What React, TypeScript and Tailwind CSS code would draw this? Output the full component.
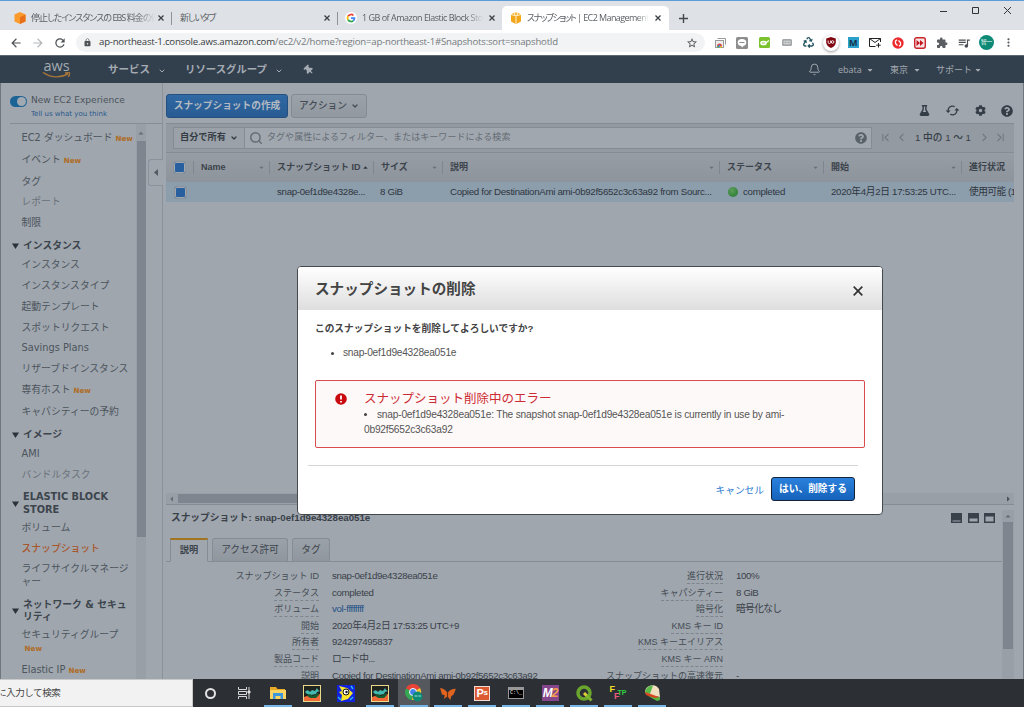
import type { ReactNode } from 'react'
import { FaCaretDown, FaCaretUp, FaFlask, FaCog, FaQuestionCircle, FaRecycle, FaThumbtack } from 'react-icons/fa'
import {
  MdArrowBack,
  MdArrowForward,
  MdCached,
  MdExtension,
  MdLock,
  MdMoreVert,
  MdQueueMusic,
  MdRefresh,
  MdStarBorder,
} from 'react-icons/md'
import { Bell, ChevronDown, ChevronFirst, ChevronLast, ChevronLeft, ChevronRight, Search } from 'lucide-react'

type SideItem = { label: string; isNew?: boolean; muted?: boolean; active?: boolean }

const sideSections: { title: string; tall?: boolean; items: SideItem[] }[] = [
  {
    title: '',
    items: [
      { label: 'EC2 ダッシュボード', isNew: true },
      { label: 'イベント', isNew: true },
      { label: 'タグ' },
      { label: 'レポート', muted: true },
      { label: '制限' },
    ],
  },
  {
    title: 'インスタンス',
    items: [
      { label: 'インスタンス' },
      { label: 'インスタンスタイプ' },
      { label: '起動テンプレート' },
      { label: 'スポットリクエスト' },
      { label: 'Savings Plans' },
      { label: 'リザーブドインスタンス' },
      { label: '専有ホスト', isNew: true },
      { label: 'キャパシティーの予約' },
    ],
  },
  {
    title: 'イメージ',
    items: [{ label: 'AMI' }, { label: 'バンドルタスク', muted: true }],
  },
  {
    title: 'ELASTIC BLOCK STORE',
    tall: true,
    items: [{ label: 'ボリューム' }, { label: 'スナップショット', active: true }, { label: 'ライフサイクルマネージャー' }],
  },
  {
    title: 'ネットワーク & セキュリティ',
    tall: true,
    items: [{ label: 'セキュリティグループ', isNew: true }, { label: 'Elastic IP', isNew: true }],
  },
]

const leftDetails = [
  { label: 'スナップショット ID', value: 'snap-0ef1d9e4328ea051e', plain: true },
  { label: 'ステータス', value: 'completed' },
  { label: 'ボリューム', value: 'vol-ffffffff', link: true },
  { label: '開始', value: '2020年4月2日 17:53:25 UTC+9' },
  { label: '所有者', value: '924297495837' },
  { label: '製品コード', value: 'ロード中...' },
  { label: '説明', value: 'Copied for DestinationAmi ami-0b92f5652c3c63a92' },
]

const rightDetails = [
  { label: '進行状況', value: '100%' },
  { label: 'キャパシティー', value: '8 GiB' },
  { label: '暗号化', value: '暗号化なし' },
  { label: 'KMS キー ID', value: '' },
  { label: 'KMS キーエイリアス', value: '' },
  { label: 'KMS キー ARN', value: '' },
  { label: 'スナップショットの高速復元', value: '-' },
]

function Cube({ main, dark }: { main: string; dark: string }) {
  return (
    <svg width="12" height="12" viewBox="0 0 12 12" className="shrink-0">
      <path d="M6 0 11.5 2.5v7L6 12 .5 9.500v-7z" fill={main} />
      <path d="M6 5.200 11.500 2.500v7L6 12z" fill={dark} />
    </svg>
  )
}

function AwsBox() {
  return (
    <svg width="12" height="12" viewBox="0 0 12 12" className="shrink-0">
      <path d="M1 3 5.600 4v8L1 9.500zM11 3 6.400 4v8L11 9.500z" fill="#f2a71b" />
      <path d="M1.200 2.300 4 .8v2.100zM10.800 2.300 8 .8v2.100zM4.600.4h2.800v2.800H4.600z" fill="#f5b93c" />
    </svg>
  )
}

function GoogleG() {
  return (
    <svg width="12" height="12" viewBox="0 0 48 48" className="shrink-0">
      <circle cx="24" cy="24" r="24" fill="#fff" />
      <g fill="none" strokeWidth="7">
        <path d="M34 14A14 14 0 0 0 12 17" stroke="#ea4335" />
        <path d="M12 17a14 14 0 0 0 0 14" stroke="#fbbc05" />
        <path d="M12 31a14 14 0 0 0 21 4" stroke="#34a853" />
        <path d="M33 35a14 14 0 0 0 5-11H24" stroke="#4285f4" />
      </g>
    </svg>
  )
}

function CloseMark() {
  return (
    <svg width="6" height="6" viewBox="0 0 6 6" stroke="#3c4043" strokeWidth="1.3" className="shrink-0">
      <path d="m.5.5 5 5M5.500.5l-5 5" />
    </svg>
  )
}

function TabStrip() {
  return (
    <div className="flex h-[30px] shrink-0 border-t border-[#5a9bd8] bg-[#dee1e6] pl-[1px] text-[9px] text-[#5b5f64] [font-feature-settings:'palt']">
      <div className="flex h-[29px] w-[157px] items-center pt-[5px] pl-[13px]">
        <Cube main="#fb9a2a" dark="#e8701a" />
        <span className="ml-[5px] w-[124px] tracking-[-0.95px] whitespace-nowrap [mask-image:linear-gradient(to_right,#000_85%,transparent)]">
          停止したインスタンスの EBS 料金の停
        </span>
      </div>
      <div className="flex w-[14px] items-center pt-[5px]">
        <CloseMark />
        <span className="ml-[7px] h-[13px] w-px shrink-0 bg-[#8f9398]" />
      </div>
      <div className="flex w-[166px] items-center pt-[5px] pl-[8px]">
        <span className="flex-1 tracking-[-1.150px]">新しいタブ</span>
        <CloseMark />
        <span className="ml-[7px] h-[13px] w-px bg-[#8f9398]" />
      </div>
      <div className="flex w-[164px] items-center pt-[5px] pl-[7px]">
        <GoogleG />
        <span className="ml-[5px] w-[122px] tracking-[-0.5px] whitespace-nowrap [mask-image:linear-gradient(to_right,#000_85%,transparent)]">
          1 GB of Amazon Elastic Block Sto
        </span>
        <span className="ml-[5px]">
          <CloseMark />
        </span>
      </div>
      <div className="mt-[5px] flex w-[167px] items-center rounded-t-[5px] bg-white pl-[8px]">
        <AwsBox />
        <span className="ml-[5px] w-[122px] whitespace-nowrap [mask-image:linear-gradient(to_right,#000_90%,transparent)]">
          <span className="tracking-[-1.600px]">スナップショット</span>
          <span className="tracking-[-0.580px]"> | EC2 Management</span>
        </span>
        <span className="ml-[6px]">
          <CloseMark />
        </span>
      </div>
      <svg className="mt-[13px] ml-[10px]" width="9" height="9" viewBox="0 0 9 9" stroke="#45494d" strokeWidth="1.4">
        <path d="M4.500 0v9M0 4.500h9" />
      </svg>
      <svg className="mt-[5px] mr-[12px] ml-auto" width="72" height="9" viewBox="0 0 72 9" fill="none" stroke="#333" strokeWidth="1">
        <path d="M0 5.500h7M64 1l7 7M71 1l-7 7" />
        <path d="M32.500 1.500h6v6h-6z" />
      </svg>
    </div>
  )
}

const extensions: ReactNode[] = [
  <svg width="11" height="10" viewBox="0 0 11 10">
    <path d="M2.500.5h8v6" fill="none" stroke="#999" />
    <rect x=".5" y="2.500" width="8" height="7" fill="#eee" stroke="#999" />
    <path d="M2 8a2.500 2.500 0 0 1 5 0z" fill="#ea4335" />
    <path d="M2 8h2l.5 1.500h-2z" fill="#34a853" />
    <path d="M7 8H5l-.5 1.500h2z" fill="#fbbc05" />
    <circle cx="4.500" cy="7.800" r="1.100" fill="#4285f4" />
  </svg>,
  <svg width="12" height="12" viewBox="0 0 12 12">
    <rect width="12" height="12" rx="1.500" fill="#8d8d8d" />
    <ellipse cx="6" cy="5.500" rx="4.300" ry="3.500" fill="#fff" />
    <path d="M5 8.500 6 10.500 8 8.500z" fill="#fff" />
    <path d="M3.500 5.500h5" stroke="#8d8d8d" />
  </svg>,
  <svg width="11" height="11" viewBox="0 0 11 11">
    <rect width="11" height="11" rx="1.500" fill="#7cc22f" />
    <ellipse cx="4.500" cy="6" rx="3.300" ry="2.300" fill="#fff" />
    <path d="M6 6.500 10 3.500" stroke="#fff" strokeWidth="1.200" />
    <path d="M3 6h3" stroke="#7cc22f" strokeWidth=".8" />
  </svg>,
  <svg width="10" height="7" viewBox="0 0 10 7">
    <rect width="10" height="7" rx="1.500" fill="#a3a6a8" />
    <path d="M2 2.200h6v2.600H2zM5 2v3" stroke="#e9e9e9" strokeWidth=".7" fill="none" />
  </svg>,
  <FaRecycle size={11} color="#235560" />,
  <span className="flex h-4 w-4 items-center justify-center rounded-full bg-white shadow-[0_1px_3px_#999]">
    <svg width="10" height="11" viewBox="0 0 10 11">
      <path d="M5 0 9.800 1.500v4Q9.500 9 5 11 .5 9 .2 5.500v-4z" fill="#800610" />
      <path d="M2.200 3.500v2q0 1 1.200 1t1.200-1v-2" stroke="#fff" fill="none" strokeWidth=".9" />
      <circle cx="6.600" cy="5" r="1.300" stroke="#fff" fill="none" strokeWidth=".9" />
    </svg>
  </span>,
  <span className="flex h-[11px] w-[11px] items-center justify-center bg-[#2ba0cb] text-[9px] font-bold text-[#14324a]">M</span>,
  <svg width="12" height="10" viewBox="0 0 12 10" fill="none" stroke="#222">
    <path d="M6.500 8.500H.5v-8h11V4M.5.5 6 4.500 11.500.5M9.500 5v4.500M7.200 7.200h4.500" />
  </svg>,
  <svg width="12" height="12" viewBox="0 0 12 12">
    <circle cx="6" cy="6" r="5.700" fill="#ec2a2e" />
    <path d="M5.500 8.500 3.500 6.500V4L5 2.800M6.500 3.500l2 2V8L7 9.200" fill="none" stroke="#fff" strokeWidth="1.300" />
  </svg>,
  <svg width="12" height="12" viewBox="0 0 12 12">
    <rect x=".7" y=".7" width="10.600" height="10.600" rx="2" fill="#f7e3e3" stroke="#c9252b" strokeWidth="1.400" />
    <path d="M2.500 3 6 6 2.500 9zM6 3l3.500 3L6 9z" fill="#c3161e" />
  </svg>,
  <MdExtension size={12} color="#5a5d61" />,
  <MdQueueMusic size={14} color="#4a4d51" />,
  <span className="flex h-[15px] w-[15px] items-center justify-center rounded-full bg-[#0c8a76] text-[6px] tracking-[-0.5px] text-white">智一</span>,
  <MdMoreVert size={13} color="#5a5d61" />,
]

function AddressBar() {
  return (
    <div className="flex h-[25px] shrink-0 items-center bg-white pl-[9px]">
      <MdArrowBack size={14} color="#505357" />
      <MdArrowForward size={14} color="#b4b6b9" className="ml-[8px]" />
      <MdRefresh size={14} color="#505357" className="ml-[8px]" />
      <div className="ml-[9px] flex h-[19px] w-[629px] items-center rounded-full bg-[#f1f3f4] pr-[7px] pl-[7px]">
        <MdLock size={9} color="#505357" />
        <span className="ml-[7px] flex-1 text-[9.600px] tracking-[-0.2px] whitespace-nowrap text-[#777b80]">
          <span className="text-[#3a3d41]">ap-northeast-1.console.aws.amazon.com</span>/ec2/v2/home?region=ap-northeast-1#Snapshots:sort=snapshotId
        </span>
        <MdStarBorder size={12} color="#505357" />
      </div>
      <div className="ml-[4px] flex">
        {extensions.map((icon, i) => (
          <span key={i} className="flex h-[19px] w-[22.2px] items-center justify-center">
            {icon}
          </span>
        ))}
      </div>
    </div>
  )
}

function AwsNav() {
  return (
    <div className="flex h-[28px] shrink-0 items-center border-t border-[#5d6772] bg-[#323f4d] pl-[42px] text-[#a4abb2]">
      <div className="-mt-[2px] flex w-[29px] flex-col items-center">
        <span className="text-[14.500px] leading-[13px] font-medium">aws</span>
        <svg width="29" height="7" viewBox="0 0 29 7" fill="none" stroke="#a8763a" strokeWidth="1.400">
          <path d="M1 .5q12 8 25 1.500M23 1q4-1 4.500 0t-1.200 4" />
        </svg>
      </div>
      <span className="ml-[37px] w-[43px] text-[10.5px] font-bold">サービス</span>
      <ChevronDown size={8} strokeWidth={3} className="mt-[2px] ml-[7px]" />
      <span className="ml-[19px] w-[84px] text-[10.400px] font-bold whitespace-nowrap">リソースグループ</span>
      <ChevronDown size={8} strokeWidth={3} className="mt-[2px] ml-[6px]" />
      <FaThumbtack size={10} className="ml-[21px] -rotate-45" />
      <Bell size={13} strokeWidth={1.8} className="ml-[494px]" />
      <span className="ml-[17px] w-[24px] text-[9px]">ebata</span>
      <FaCaretDown size={8} className="ml-[4px]" />
      <span className="ml-[16px] w-[19px] text-[9px] whitespace-nowrap">東京</span>
      <FaCaretDown size={8} className="ml-[4px]" />
      <span className="ml-[15px] w-[34px] text-[9px] whitespace-nowrap">サポート</span>
      <FaCaretDown size={8} className="ml-[4px]" />
    </div>
  )
}

function Sidebar() {
  return (
    <div className="relative flex w-[162px] shrink-0 flex-col border-r border-[#8b929a] pl-[9px] font-['DejaVu_Sans','Noto_Sans_CJK_JP',sans-serif] text-[9.8px] text-[#4c545c]">
      <div className="h-[41px] shrink-0 border-b border-[#868d95] pt-[12px]">
        <div className="flex h-[12px] items-center">
          <span className="flex h-[11px] w-[17px] justify-end rounded-full bg-[#1c6496] p-[1px]">
            <span className="h-[9px] w-[9px] rounded-full bg-[#a2a9b1]" />
          </span>
          <span className="ml-[4px] text-[9.050px]">New EC2 Experience</span>
        </div>
        <div className="mt-[1px] pl-[21px] text-[7px] leading-[12px] text-[#2c5a8c]">Tell us what you think</div>
      </div>
      <div className="flex min-h-0 flex-1">
        <div className="w-[125px] pt-[4px]">
          {sideSections.map((section) => (
            <div key={section.title}>
              {section.title && (
                <div className={'flex items-center pt-[6px] font-bold text-[#3c444c] ' + (section.tall ? 'pb-[2px]' : 'pb-[3px]')}>
                  <svg width="7" height="6" viewBox="0 0 7 6" className="mr-[4px] ml-[2px] shrink-0">
                    <path d="M0 .5h7L3.500 6z" fill="#2b323a" />
                  </svg>
                  <span className="w-[106px] leading-[12.200px]">{section.title}</span>
                </div>
              )}
              {section.items.map((item) => (
                <div
                  key={item.label}
                  className={
                    'w-[121px] py-[4px] pl-[11.500px] leading-[12.800px] [line-break:anywhere] ' +
                    (item.active ? 'font-medium text-[#a8562a]' : item.muted ? 'text-[#6a727a]' : '')
                  }
                >
                  <span className={item.label.startsWith('EC2') ? 'whitespace-nowrap' : ''}>
                    {item.label}
                    {item.isNew && <b className="ml-[3px] inline-block text-[7.200px] whitespace-nowrap text-[#ae6c26]">New</b>}
                  </span>
                </div>
              ))}
            </div>
          ))}
        </div>
        <div className="ml-[1px] w-[10px] bg-[#989fa7]">
          <div className="flex h-[17px] items-center justify-center">
            <FaCaretUp size={8} color="#666d75" />
          </div>
          <div className="mx-[0.500px] h-[396px] bg-[#7e858e]" />
        </div>
      </div>
      <div className="absolute top-[76px] left-[147px] flex h-[27px] w-[15px] items-center justify-center rounded-l-[3px] border border-r-0 border-[#8b929a] bg-[#9fa6ae]">
        <svg width="4" height="7" viewBox="0 0 4 7">
          <path d="M4 0v7L0 3.500z" fill="#525a62" />
        </svg>
      </div>
    </div>
  )
}

function Checkbox() {
  return <span className="block h-[13px] w-[13px] shrink-0 rounded-[3px] border border-[#8b939b] bg-[#28609f] shadow-[inset_0_0_0_1px_#a0a7af]" />
}

function HeadCell({ className, label, sort }: { className: string; label: string; sort?: 'up' | 'down' }) {
  return (
    <div className={'flex shrink-0 items-center justify-between pr-[4px] pl-[7px] whitespace-nowrap ' + className}>
      {label}
      {sort === 'up' && <FaCaretUp size={7} color="#333a42" />}
      {sort === 'down' && <FaCaretDown size={7} color="#68707a" />}
    </div>
  )
}

function SnapshotTable() {
  return (
    <>
      <div className="mt-[5px] flex h-[29px] w-[848px] shrink-0 items-center border-t border-[#848b93] bg-[#939aa2] pl-[7px] text-[9px]">
        <div className="flex h-[22px] w-[72px] items-center justify-between border border-[#858c94] bg-[#9aa1a9] px-[6px] text-[9.200px] font-bold text-[#343b43]">
          自分で所有
          <ChevronDown size={8} strokeWidth={4} />
        </div>
        <div className="flex h-[22px] w-[627px] items-center border border-l-0 border-[#858c94] bg-[#a0a7af] pr-[4px] pl-[4px] text-[#656c74]">
          <Search size={14} strokeWidth={2.500} />
          <span className="ml-[4px] flex-1 text-[9.050px]">タグや属性によるフィルター、またはキーワードによる検索</span>
          <FaQuestionCircle size={12} color="#596169" />
        </div>
        <div className="flex flex-1 items-center pl-[7px] text-[#727981]">
          <ChevronFirst size={13} />
          <ChevronLeft size={13} className="ml-[3px]" />
          <span className="mx-auto text-[9.700px] font-medium whitespace-nowrap text-[#373e46]">1 中の 1 ～ 1</span>
          <ChevronRight size={13} className="mr-[3px]" />
          <ChevronLast size={13} className="mr-[7px]" />
        </div>
      </div>
      <div className="flex h-[30px] w-[848px] shrink-0 items-center divide-x divide-[#7f868e] overflow-hidden border-t border-[#858c94] bg-linear-to-b from-[#969da5] to-[#8d949c] text-[9px] font-bold text-[#3c434b] [&>*]:h-[13px]">
        <div className="flex w-[28px] shrink-0 items-center pl-[7px]">
          <Checkbox />
        </div>
        <HeadCell className="w-[76px]" label="Name" sort="down" />
        <HeadCell className="w-[104px]" label="スナップショット ID" sort="up" />
        <HeadCell className="w-[69px]" label="サイズ" sort="down" />
        <HeadCell className="w-[277px]" label="説明" sort="down" />
        <HeadCell className="w-[104px]" label="ステータス" sort="down" />
        <HeadCell className="w-[138px]" label="開始" sort="down" />
        <HeadCell className="w-[52px]" label="進行状況" />
      </div>
      <div className="flex h-[20px] w-[848px] shrink-0 items-center overflow-hidden bg-[#8c9dac] text-[9.700px] tracking-[-0.3px] whitespace-nowrap text-[#2f363e] [&>*]:shrink-0">
        <div className="w-[111px] pl-[8px]">
          <Checkbox />
        </div>
        <div className="w-[103px]">snap-0ef1d9e4328e...</div>
        <div className="w-[70px]">8 GiB</div>
        <div className="w-[278px]">Copied for DestinationAmi ami-0b92f5652c3c63a92 from Sourc...</div>
        <div className="flex w-[103px] items-center">
          <span className="mr-[5px] h-[10px] w-[10px] rounded-full bg-radial-[at_40%_30%] from-[#5c9f5c] to-[#23752a]" />
          completed
        </div>
        <div className="w-[138px]">2020年4月2日 17:53:25 UTC...</div>
        <div className="tracking-[-0.5px]">使用可能 (1</div>
      </div>
    </>
  )
}

function DetailList({ rows, className }: { rows: { label: string; value: string; link?: boolean; plain?: boolean }[]; className: string }) {
  return (
    <div className={className}>
      {rows.map((row) => (
        <div key={row.label} className="flex h-[16.600px] items-start whitespace-nowrap">
          <div className="flex flex-1 justify-end">
            <span className={'h-[15px] text-[9px] leading-[15px] ' + (row.plain ? '' : 'border-b border-dashed border-[#7d848c]')}>{row.label}</span>
          </div>
          <div
            className={
              'ml-[13px] w-[220px] text-[9.700px] leading-[14px] ' +
              (/^[ロ暗]/.test(row.value) ? 'tracking-[-0.6px] ' : 'tracking-[-0.35px] ') +
              (row.link ? 'text-[#234f86]' : 'text-[#3a4149]')
            }
          >
            {row.value}
          </div>
        </div>
      ))}
    </div>
  )
}

function DetailPane() {
  return (
    <div className="flex h-[175px] w-[848px] shrink-0 border-t border-[#858c94]">
      <div className="flex flex-1 flex-col overflow-hidden">
        <div className="flex h-[33px] shrink-0 items-start pt-[6px] pl-[5px] text-[9.700px] leading-[13px] font-bold text-[#3a4149]">
          <span className="whitespace-nowrap">スナップショット: snap-0ef1d9e4328ea051e</span>
          <svg width="44" height="10" viewBox="0 0 44 10" className="mt-[2px] mr-[7px] ml-auto">
            <path d="M0 0h11v10H0zM17 0h11v10H17zM33 0h11v10H33z" fill="#39414a" />
            <path d="M1.500 7.500h8v1h-8zM18.500 5.500h8v3h-8zM34.500 3.500h8v5h-8z" fill="#9fa6ae" />
          </svg>
        </div>
        <div className="flex h-[24px] shrink-0 items-end border-b border-[#858c94] pl-[4px] text-[9.200px] text-[#3c434b]">
          <div className="-mb-px flex h-[24px] w-[38px] items-center justify-center border border-t-2 border-[#858c94] border-t-[#a3741f] border-b-[#9fa6ae] font-bold">
            説明
          </div>
          <div className="ml-[4px] flex h-[23px] w-[76px] items-center justify-center rounded-t-[3px] border border-b-0 border-[#858c94] bg-linear-to-b from-[#9aa1a9] to-[#8f969e] text-[9.700px]">
            アクセス許可
          </div>
          <div className="ml-[4px] flex h-[23px] w-[38px] items-center justify-center rounded-t-[3px] border border-b-0 border-[#858c94] bg-linear-to-b from-[#9aa1a9] to-[#8f969e] text-[9.700px]">
            タグ
          </div>
        </div>
        <div className="flex pt-[7px] text-[#454c54]">
          <DetailList rows={leftDetails} className="w-[386px]" />
          <DetailList rows={rightDetails} className="w-[404px]" />
        </div>
      </div>
      <div className="mt-[5px] w-[12px] bg-[#989fa7]">
        <div className="flex h-[12px] items-center justify-center">
          <FaCaretUp size={8} color="#666d75" />
        </div>
        <div className="mx-[1px] h-[127px] bg-[#7e858e]" />
      </div>
    </div>
  )
}

function DeleteModal() {
  return (
    <div className="absolute top-[266px] left-[297px] flex h-[249px] w-[586px] flex-col overflow-hidden rounded-[4px] border border-[#44494e] bg-white text-[#444]">
      <div className="flex h-[43px] items-center justify-between bg-linear-to-b from-white to-[#dedede] pt-[2px] pr-[19px] pl-[17px]">
        <h2 className="text-[14.600px] font-bold">スナップショットの削除</h2>
        <svg width="10" height="10" viewBox="0 0 10 10" stroke="#333" strokeWidth="1.700" className="mt-[2px]">
          <path d="M.7.7l8.600 8.600M9.300.7.7 9.300" />
        </svg>
      </div>
      <div className="flex flex-1 flex-col pl-[17px]">
        <p className="mt-[11px] text-[9.700px] leading-[15px] font-bold">このスナップショットを削除してよろしいですか?</p>
        <ul className="mt-[10px] flex items-center pl-[16px] text-[10.200px] leading-[14px] tracking-[-0.26px] text-[#555]">
          <li className="mr-[9px] h-[3px] w-[3px] rounded-full bg-[#444]" />
          <li>snap-0ef1d9e4328ea051e</li>
        </ul>
        <div className="mt-[20px] flex h-[68px] w-[550px] rounded-[2px] border border-[#d94b4e] bg-[#fdf9f8] pl-[19px]">
          <svg width="12" height="12" viewBox="0 0 12 12" className="mt-[12px] shrink-0">
            <circle cx="6" cy="6" r="5.800" fill="#c90a0f" />
            <path d="M6 2.500v4M6 8v1.500" stroke="#fff" strokeWidth="1.800" />
          </svg>
          <div className="ml-[17px] w-[440px] pt-[10px] text-[10.200px] leading-[14.500px] text-[#555]">
            <div className="text-[12.500px] leading-[17px] text-[#cc2b33]">スナップショット削除中のエラー</div>
            <div className="w-[430px] tracking-[-0.22px]">
              <span className="mr-[10px] mb-[2px] inline-block h-[3px] w-[3px] rounded-full bg-[#444]" />
              snap-0ef1d9e4328ea051e: The snapshot snap-0ef1d9e4328ea051e is currently in use by ami-0b92f5652c3c63a92
            </div>
          </div>
        </div>
        <div className="mt-[17px] ml-[-7px] h-px w-[550px] bg-[#d5d5d5]" />
        <div className="mt-[11px] flex items-center justify-end pr-[27px]">
          <span className="mt-[4px] mr-[7px] text-[9.700px] text-[#2b7bd0]">キャンセル</span>
          <button className="h-[24px] w-[84px] rounded-[3px] border-[1.500px] border-[#12233a] bg-linear-to-b from-[#2b81dc] to-[#1462bb] text-[9.700px] font-bold whitespace-nowrap text-white">
            はい、削除する
          </button>
        </div>
      </div>
    </div>
  )
}

const lizard = (
  <svg width="18" height="17" viewBox="0 0 18 17">
    <rect width="18" height="17" fill="#e9d98a" />
    <rect x="1" y="1" width="16" height="15" fill="#20241f" />
    <path d="M1 16v-4l3-1 3 1 4 1 3-3 3-1v7z" fill="#f06a35" />
    <path d="M2 7q2-3 4-1l1 1 2-2 3 1 2-3 1 2 2 1-3 1-1 2-5 1-4-1z" fill="#42b9b0" />
    <path d="M4 10l3-1 3 2 5-3 1 2-3 3-6 0z" fill="#165a2f" />
  </svg>
)

const taskbarApps: { icon: ReactNode; open?: boolean; active?: boolean }[] = [
  { icon: <span className="h-[11px] w-[11px] rounded-full border-[2px] border-[#e4e4e4]" /> },
  {
    icon: (
      <svg width="13" height="12" viewBox="0 0 13 12" fill="none" stroke="#d8d8d8">
        <path d="M.5 0v2.500h8V0M.5 12V9.500h8V12M.5 4.500h8v3h-8zM11 0v12" />
        <path d="M10 4h2v2h-2z" fill="#fff" />
      </svg>
    ),
  },
  {
    icon: (
      <svg width="16" height="14" viewBox="0 0 16 14">
        <path d="M0 1h6l1.500 2H15v10H0z" fill="#e9aa28" />
        <path d="M0 4h16v9H0z" fill="#fcd462" />
        <path d="M3 7h10v6h-2.500v-3h-5v3H3z" fill="#3e97dd" />
      </svg>
    ),
    open: true,
  },
  { icon: lizard },
  {
    icon: (
      <svg width="18" height="17" viewBox="0 0 18 17">
        <rect width="18" height="17" fill="#1322dd" />
        <path d="M2 1l8 2 6 5-5 6-7 2 1-6-3-3 3-1z" fill="#f8e52b" />
        <circle cx="9" cy="7" r="3" fill="#fff" stroke="#111" />
        <circle cx="9.500" cy="7" r="1.200" fill="#111" />
        <path d="M14 1l2 3M1 12l3 3M13 15l3-3" stroke="#25b8e8" strokeWidth="1.500" />
      </svg>
    ),
  },
  { icon: lizard, open: true },
  {
    icon: (
      <svg width="18" height="18" viewBox="0 0 18 18">
        <path d="M8 8 .9 4.500A8 8 0 0 1 15 4z" fill="#e84436" />
        <path d="M8 8 .9 4.500A8 8 0 0 0 7 16z" fill="#35a853" />
        <path d="M8 8l7-4a8 8 0 0 1-8 12z" fill="#fac22b" />
        <circle cx="8" cy="8" r="3.500" fill="#3f7fe8" stroke="#fff" />
        <circle cx="12.500" cy="12.500" r="5" fill="#0d8a76" />
        <path d="M9.500 12h3M13.500 12h2.500" stroke="#aee2d8" />
      </svg>
    ),
    open: true,
    active: true,
  },
  {
    icon: (
      <svg width="16" height="13" viewBox="0 0 17 14">
        <path d="M8 6.500Q5 1.500 0 1l2 7 3 1-1 4 4-3 3 4 1-4 2.500-2L17 2q-6 0-9 4.500z" fill="#e0641f" />
        <path d="M8 5v6" stroke="#6a2a0c" strokeWidth="1.200" />
      </svg>
    ),
    open: true,
  },
  {
    icon: (
      <span className="flex h-[15px] w-[16px] items-center justify-center border border-[#f0dcd4] bg-[#db5a32] text-[11px] font-bold tracking-[-0.5px] text-white">
        P<span className="text-[8px]">s</span>
      </span>
    ),
    open: true,
  },
  {
    icon: (
      <span className="h-[12px] w-[16px] border border-t-[3px] border-[#999] bg-black pl-[1px] font-['Liberation_Mono',monospace] text-[5px] leading-[6px] text-white">
        C:\_
      </span>
    ),
    open: true,
  },
  {
    icon: (
      <span className="h-[16px] w-[17px] bg-[#85468c] text-center text-[12px] leading-[16px] font-bold tracking-[-1px] text-white italic">
        M<span className="text-[#f6a04b]">2</span>
      </span>
    ),
    open: true,
  },
  {
    icon: (
      <svg width="17" height="17" viewBox="0 0 17 17">
        <circle cx="8" cy="8" r="6" fill="none" stroke="#6aa52e" strokeWidth="3.500" />
        <path d="M8 8l3 3" stroke="#e5cf38" strokeWidth="3" />
        <path d="M10.500 10.500l5 5" stroke="#7db52e" strokeWidth="3" />
      </svg>
    ),
    open: true,
  },
  {
    icon: (
      <span className="flex h-[16px] items-center text-[9px] font-bold">
        <span className="-mt-[6px] text-[#f5df23]">F</span>
        <span className="mt-[7px] -ml-[1px] text-[#ef5b78]">F</span>
        <span className="-ml-[2px] text-[7px] text-[#2fd040]">TP</span>
      </span>
    ),
    open: true,
  },
  {
    icon: (
      <svg width="17" height="17" viewBox="0 0 17 17">
        <path d="M1 8A7.500 7.500 0 0 1 15 4l1 8-6-1z" fill="#f1dfc0" />
        <path d="M1 8A7.500 7.500 0 0 1 9 .5L6 9z" fill="#58b848" />
        <path d="M1 7l14 5-1 3L2 10z" fill="#d8471f" />
        <path d="M4 11l9 5 3-1v-3l-5 1z" fill="#55b53f" />
      </svg>
    ),
    open: true,
  },
]

function Taskbar() {
  return (
    <div className="flex h-[28px] shrink-0 bg-[#2c3034]">
      <div className="flex w-[193px] shrink-0 items-center overflow-hidden border border-l-0 border-[#c9c9c9] bg-[#f2f2f2] text-[9.600px] whitespace-nowrap text-[#444]">
        <span className="-ml-[3px] tracking-[-0.500px]">に入力して検索</span>
      </div>
      {taskbarApps.map((app, i) => (
        <div key={i} className={'flex w-[34px] flex-col items-center ' + (app.active ? 'bg-[#55595d] bg-clip-content px-[1px]' : '')}>
          <div className="flex h-[26px] items-center pt-[2px]">{app.icon}</div>
          {app.open && <div className="h-[2px] w-[28px] bg-[#76b5e8]" />}
        </div>
      ))}
    </div>
  )
}

export default function App() {
  return (
    <div className="relative flex h-[707px] w-[1024px] flex-col overflow-hidden bg-[#9fa6ae] font-['Liberation_Sans','Noto_Sans_CJK_JP',sans-serif]">
      <div className="contents font-['Open_Sans','Noto_Sans_CJK_JP',sans-serif]">
        <TabStrip />
        <AddressBar />
        <AwsNav />
      </div>
      <div className="flex h-[596px] shrink-0 overflow-hidden border-x border-[#70777f]">
        <Sidebar />
        <div className="flex flex-1 flex-col pl-[3px]">
          <div className="flex h-[35px] shrink-0 items-end">
            <button className="h-[24px] w-[122px] rounded-[3px] border border-[#24507f] bg-linear-to-b from-[#3069a4] to-[#285b92] text-[9.700px] font-bold whitespace-nowrap text-[#b3bac2]">
              スナップショットの作成
            </button>
            <button className="ml-[3px] flex h-[24px] w-[76px] items-center justify-center gap-[4px] rounded-[3px] border border-[#848b93] bg-linear-to-b from-[#9ba2aa] to-[#9198a0] text-[9.700px] font-medium whitespace-nowrap text-[#454c54]">
              アクション
              <ChevronDown size={8} strokeWidth={4} />
            </button>
            <div className="mr-[10px] ml-auto flex items-center gap-[15px] text-[#343c45]">
              <FaFlask size={11} />
              <MdCached size={15} />
              <FaCog size={11} />
              <FaQuestionCircle size={12} />
            </div>
          </div>
          <SnapshotTable />
          <div className="flex-1" />
          <div className="flex h-[11px] w-[848px] shrink-0 items-center justify-between bg-[#989fa7]">
            <FaCaretDown size={8} color="#666d75" className="ml-[2px] rotate-90" />
            <div className="mr-auto ml-[2px] h-[9px] w-[500px] bg-[#7e858e]" />
            <FaCaretDown size={8} color="#4b535b" className="mr-[2px] -rotate-90" />
          </div>
          <DetailPane />
        </div>
      </div>
      <Taskbar />
      <DeleteModal />
    </div>
  )
}
